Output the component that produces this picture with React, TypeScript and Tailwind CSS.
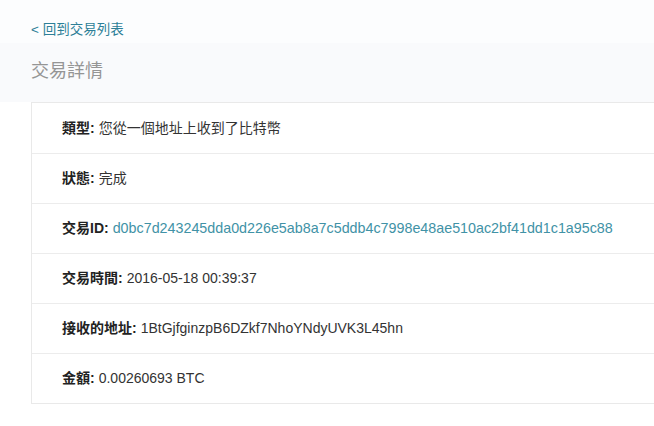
const rows: { label: string; value: string; link?: boolean }[] = [
  { label: "類型:", value: "您從一個地址上收到了比特幣" },
  { label: "狀態:", value: "完成" },
  { label: "交易ID:", value: "d0bc7d243245dda0d226e5ab8a7c5ddb4c7998e48ae510ac2bf41dd1c1a95c88", link: true },
  { label: "交易時間:", value: "2016-05-18 00:39:37" },
  { label: "接收的地址:", value: "1BtGjfginzpB6DZkf7NhoYNdyUVK3L45hn" },
  { label: "金額:", value: "0.00260693 BTC" },
];

export default function App() {
  return (
    <div
      className="w-[654px] h-[426px] overflow-hidden bg-white text-[#333]"
      style={{ fontFamily: '"Liberation Sans", "Noto Sans CJK TC", sans-serif' }}
    >
      {/* Header */}
      <div className="bg-[#fcfdfe] h-[43px] pl-[31px] pt-[17px]">
        <a className="text-[13.5px] leading-[18px] text-[#2c7f97]">&lt; 回到交易列表</a>
      </div>
      <div className="bg-[#f9fafc] h-[59px] pl-[31px] pt-[16px]">
        <h1 className="text-[18px] leading-[24px] text-[#959595]">交易詳情</h1>
      </div>

      {/* Detail card */}
      <div className="ml-[31px] w-[640px] border border-[#e9e9e9] bg-white">
        {rows.map((row, i) => (
          <div
            key={i}
            className={`h-[50px] flex items-center pl-[30px] text-[14px] ${i > 0 ? "border-t border-[#ececec]" : ""}`}
          >
            <span className="font-bold text-[#222] mr-[4px]">{row.label}</span>
            {row.link ? (
              <span className="text-[14.3px] text-[#4192a6]">{row.value}</span>
            ) : (
              <span className="text-[#333]">{row.value}</span>
            )}
          </div>
        ))}
      </div>
    </div>
  );
}
